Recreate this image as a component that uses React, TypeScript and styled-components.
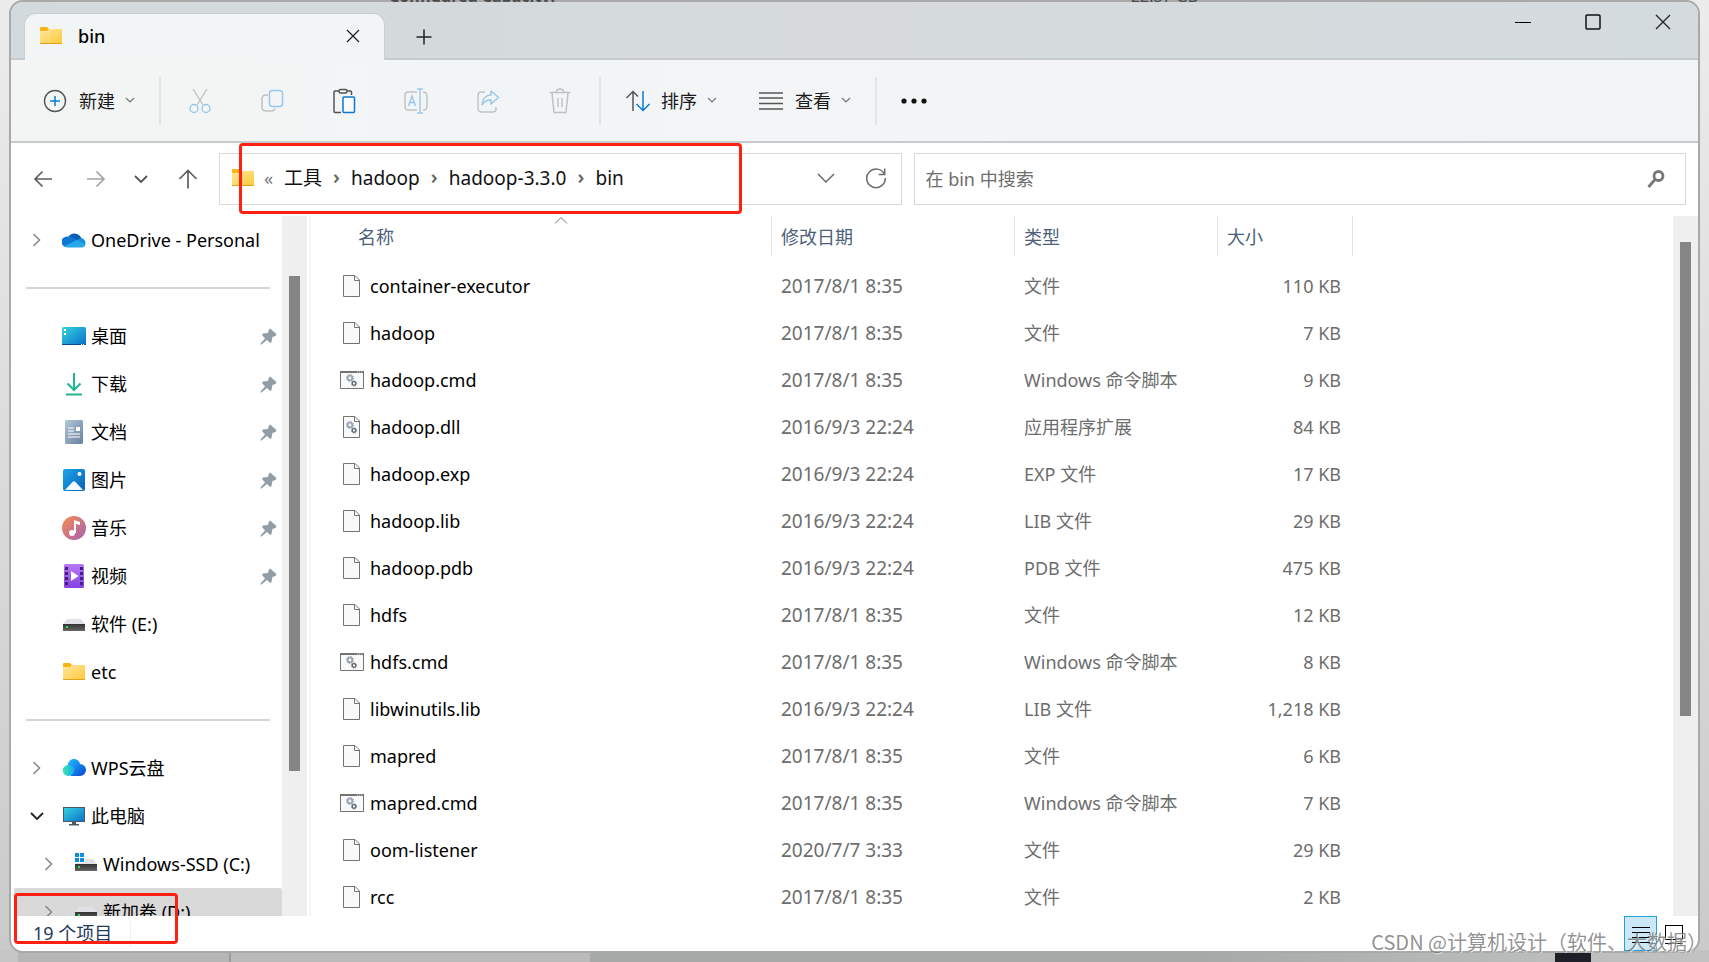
import React from "react";
import styled, { createGlobalStyle, css } from "styled-components";

const Global = createGlobalStyle`
  *, *::before, *::after { box-sizing: border-box; }
  html, body { margin: 0; padding: 0; }
  body, button, input {
    font-family: "Noto Sans", "Noto Sans CJK SC", sans-serif;
    font-size: 18px;
    line-height: 24px;
  }
  button { border: 0; padding: 0; background: none; color: inherit; }
  svg { display: block; flex: none; }
`;

const Desktop = styled.div`
  position: relative;
  display: flex;
  height: 100vh;
  min-height: 480px;
  padding: 0 9px 9px;
  overflow: hidden;
  background: linear-gradient(180deg, #ececec 0%, #dcdcdc 45%, #cacaca 100%);
`;

const DesktopFloor = styled.div`
  position: absolute;
  left: 0;
  right: 0;
  bottom: 0;
  height: 12px;
  background: linear-gradient(90deg, #c6c6c6 0 18px, #b6b6b6 18px 229px, #9c9c9c 229px 231px, #bababa 231px 590px, #a7a9a8 590px 1200px, #b9bbba 1500px, #c2c2c2 100%);
`;

const FloorTile = styled.span`
  position: absolute;
  right: 118px;
  bottom: 0;
  width: 36px;
  height: 11px;
  background: #1d2028;
`;

const Window = styled.main`
  position: relative;
  flex: 1;
  min-width: 0;
  display: flex;
  flex-direction: column;
  border: 2px solid #a9a9a9;
  border-radius: 14px;
  overflow: hidden;
  background: #fff;
`;

const HiddenPage = styled.div`
  position: absolute;
  top: 0;
  left: 389px;
  right: 0;
  height: 2px;
  overflow: hidden;
  color: #4c4c4c;
`;

const HiddenLine = styled.div`
  display: flex;
  gap: 576px;
  margin-top: -14px;
  font-size: 16px;
  line-height: 20px;
  white-space: nowrap;
`;

const TitleBar = styled.header`
  display: flex;
  align-items: flex-end;
  height: 58px;
  padding-left: 13px;
  background: linear-gradient(90deg, #d3dadd, #d6dadb 50%, #d4dbdf);
  box-shadow: inset 0 -2px #c6cbce;
`;

const Tab = styled.div`
  display: flex;
  align-items: center;
  width: 361px;
  height: 47px;
  margin-top: 11px;
  padding: 0 23px 2px 14px;
  border: 1px solid #c9cfd1;
  border-bottom: 0;
  border-radius: 12px 12px 0 0;
  background: #f2f5f5;
  font-weight: 500;
`;

const TabName = styled.span`
  flex: 1;
  margin-left: 15px;
`;

const IconButton = styled.button<{ $w?: number; $h?: number }>`
  display: inline-flex;
  align-items: center;
  justify-content: center;
  width: ${(p) => p.$w ?? 24}px;
  height: ${(p) => p.$h ?? 24}px;
`;

const WindowControls = styled.div`
  display: flex;
  align-self: flex-start;
  margin-left: auto;
`;

const CommandBar = styled.div`
  display: flex;
  align-items: center;
  height: 83px;
  padding-left: 32px;
  background: linear-gradient(90deg, #f3f5f4, #f2f5f6 30%, #f3f4f5 60%, #f1f4f6);
  border-bottom: 2px solid #c5cacc;
`;

const CommandButton = styled.button<{ $gap: number }>`
  display: inline-flex;
  align-items: center;
  gap: 10px;
  height: 40px;
  color: #1b1b1b;
  white-space: nowrap;
  & > :first-child { margin-right: ${(p) => p.$gap}px; }
`;

const CommandGroup = styled.div`
  display: flex;
  gap: 42px;
`;

const CommandRule = styled.span`
  width: 2px;
  height: 48px;
  margin: 0 24px;
  background: #e3e5e6;
`;

const Tools = styled.div`
  display: flex;
  gap: 48px;
  padding: 0 3px;
`;

const NavRow = styled.div`
  display: flex;
  align-items: flex-start;
  height: 73px;
  padding: 10px 12px 0 0;
`;

const NavButtons = styled.div`
  display: flex;
  align-items: center;
  width: 208px;
  height: 52px;
  padding-left: 6px;
`;

const Address = styled.nav`
  display: flex;
  align-items: center;
  flex: 670 1 0;
  min-width: 0;
  height: 52px;
  padding: 0 0 2px 11px;
  border: 1px solid #d9d9d9;
`;

const Crumbs = styled.ol`
  display: flex;
  align-items: center;
  flex: 1;
  min-width: 0;
  margin: 0;
  padding: 0;
  list-style: none;
  overflow: hidden;
  white-space: nowrap;
  font-size: 19px;
`;

const Crumb = styled.li`
  display: flex;
  align-items: center;
  & + &::before {
    content: "›";
    width: 29px;
    padding-bottom: 2px;
    text-align: center;
    font-size: 20px;
    font-weight: 600;
    color: #666;
  }
`;

const CrumbLink = styled.a`
  color: #111;
  text-decoration: none;
`;

const Overflow = styled.span`
  width: 29px;
  padding-left: 9px;
  color: #777;
`;

const SearchBox = styled.label`
  display: flex;
  align-items: center;
  flex: 739 1 0;
  min-width: 0;
  height: 52px;
  margin-left: 12px;
  padding: 0 20px 0 10px;
  border: 1px solid #d9d9d9;
`;

const SearchInput = styled.input`
  flex: 1;
  min-width: 0;
  padding: 0;
  border: 0;
  outline: 0;
  background: none;
  &::placeholder { color: #6d6d6d; opacity: 1; }
`;

const Body = styled.div`
  display: flex;
  flex: 1;
  min-height: 0;
`;

const Sidebar = styled.aside`
  width: 271px;
  flex: none;
  overflow: hidden;
  padding-left: 3px;
`;

const SideRow = styled.a<{ $child?: boolean; $selected?: boolean }>`
  display: flex;
  align-items: center;
  height: 48px;
  padding-left: ${(p) => (p.$child ? 29 : 17)}px;
  color: #000;
  text-decoration: none;
  white-space: nowrap;
  ${(p) => p.$selected && css`background: #d9d9d9; border-radius: 2px;`}
`;

const Twisty = styled.span`
  display: flex;
  justify-content: center;
  width: 11px;
  margin-right: 20px;
`;

const SideIcon = styled.span`
  width: 24px;
  margin-right: 5px;
`;

const SideLabel = styled.span`
  flex: 1;
`;

const PinSlot = styled.span`
  margin-right: 5px;
`;

const SideRule = styled.hr`
  height: 2px;
  margin: 23px 12px;
  border: 0;
  background: #d4d4d4;
`;

const ScrollTrack = styled.div<{ $top: number; $size: number; $rest: number }>`
  display: flex;
  flex-direction: column;
  align-items: center;
  flex: none;
  width: 25px;
  padding-top: ${(p) => p.$top}px;
  background: #efefef;
  &::before {
    content: "";
    flex: ${(p) => p.$size} 1 0;
    width: 11px;
    background: #858585;
  }
  &::after {
    content: "";
    flex: ${(p) => p.$rest} 1 0;
  }
`;

const FilePane = styled.section`
  flex: 1;
  min-width: 0;
  margin-left: 2px;
  border-left: 2px solid #f6f6f6;
  overflow: hidden;
`;

const FileTable = styled.table`
  width: 1042px;
  border-collapse: separate;
  border-spacing: 0;
  table-layout: fixed;
`;

const HeadCell = styled.th<{ $w: number; $pad: number }>`
  position: relative;
  width: ${(p) => p.$w}px;
  height: 40px;
  padding: 1px 0 0 ${(p) => p.$pad}px;
  border-right: 1px solid #e2e2e2;
  text-align: left;
  font-weight: 400;
  color: #4c607a;
`;

const SortMark = styled.svg`
  position: absolute;
  top: 0;
  left: 50%;
  margin-left: 13px;
`;

const HeadGap = styled.tr`
  height: 6px;
`;

const FileRow = styled.tr`
  height: 47px;
`;

const Cell = styled.td<{ $right?: boolean; $date?: boolean }>`
  padding: 0 ${(p) => (p.$right ? 12 : 0)}px 0 9px;
  text-align: ${(p) => (p.$right ? "right" : "left")};
  font-size: ${(p) => (p.$date ? 19 : 18)}px;
  color: #6d6d6d;
  white-space: nowrap;
`;

const FileName = styled.div`
  display: flex;
  align-items: center;
  gap: 6px;
  margin-left: 20px;
  color: #000;
`;

const StatusBar = styled.footer`
  display: flex;
  align-items: center;
  height: 35px;
  padding: 0 8px 0 22px;
  color: #1e395b;
`;

const StatusText = styled.span`
  width: 98px;
  margin-right: auto;
  padding-bottom: 2px;
  border-right: 1px solid #f0f0f0;
`;

const ViewToggle = styled.button<{ $active?: boolean }>`
  display: flex;
  align-items: center;
  justify-content: center;
  width: 33px;
  height: 35px;
  ${(p) => p.$active && css`background: #cce8f7; border: 1px solid #26a0da;`}
`;

const Marker = styled.div<{ $x: number; $y: number; $w: number; $h: number }>`
  position: absolute;
  left: ${(p) => p.$x}px;
  top: ${(p) => p.$y}px;
  width: ${(p) => p.$w}px;
  height: ${(p) => p.$h}px;
  border: 3px solid #fd2013;
  border-radius: 4px;
  pointer-events: none;
`;

const Watermark = styled.div`
  position: absolute;
  right: 2px;
  bottom: 6px;
  font-family: "Noto Sans CJK SC", sans-serif;
  font-size: 20px;
  line-height: 28px;
  color: rgba(110, 110, 110, 0.75);
  text-shadow: 1px 1px rgba(255, 255, 255, 0.6);
  white-space: nowrap;
  pointer-events: none;
`;

const HiddenDefs = styled.svg`
  position: absolute;
  width: 0;
  height: 0;
`;

const S = (p: React.SVGProps<SVGSVGElement> & { w: number; h: number }) => {
  const { w, h, ...rest } = p;
  return <svg width={w} height={h} viewBox={`0 0 ${w} ${h}`} fill="none" aria-hidden="true" {...rest} />;
};

const Defs = () => (
  <HiddenDefs aria-hidden="true">
    <defs>
      <linearGradient id="folder" x1="0" y1="0" x2="1" y2="1"><stop stopColor="#ffe8a0" /><stop offset="1" stopColor="#ffc836" /></linearGradient>
      <linearGradient id="desk" x1="0" y1="0" x2="1" y2="1"><stop stopColor="#35d5e2" /><stop offset="1" stopColor="#0b6fc6" /></linearGradient>
      <linearGradient id="doc" x1="0" y1="0" x2="1" y2="1"><stop stopColor="#b4c6d9" /><stop offset="1" stopColor="#68819f" /></linearGradient>
      <linearGradient id="pic" x1="0" y1="0" x2="1" y2="1"><stop stopColor="#1ca4ea" /><stop offset="1" stopColor="#0863b5" /></linearGradient>
      <linearGradient id="music" x1="0" y1="0" x2="1" y2="1"><stop stopColor="#fb8b4e" /><stop offset="1" stopColor="#a361b5" /></linearGradient>
      <linearGradient id="video" x1="0" y1="0" x2="0" y2="1"><stop stopColor="#b77af5" /><stop offset="1" stopColor="#8741e0" /></linearGradient>
      <linearGradient id="wps" x1="0" y1="0" x2="1" y2="0"><stop stopColor="#3be8b0" /><stop offset="1" stopColor="#16a4f5" /></linearGradient>
      <linearGradient id="wpsb" x1="0" y1="0" x2="1" y2="1"><stop stopColor="#22c0ff" /><stop offset="1" stopColor="#0842d2" /></linearGradient>
      <linearGradient id="disk" x1="0" y1="0" x2="0" y2="1"><stop stopColor="#333" /><stop offset="1" stopColor="#666" /></linearGradient>
    </defs>
  </HiddenDefs>
);

const Folder = () => (
  <S w={24} h={20}>
    <path d="M1 2q0-1 1-1h6l2 2-1 4H1z" fill="#f9b516" />
    <path d="M1 5h7l2-2h13v15H1z" fill="url(#folder)" />
    <path d="M1 17.5h22" stroke="#e3a21d" />
  </S>
);
const Close = ({ s = 14 }: { s?: number }) => (
  <S w={16} h={16} stroke="#222" strokeWidth="1.3"><path d={`M${8 - s / 2} ${8 - s / 2}l${s} ${s}M${8 + s / 2} ${8 - s / 2}l-${s} ${s}`} /></S>
);
const Down = ({ s = 4, c = "#777", w = 1.2 }: { s?: number; c?: string; w?: number }) => (
  <S w={s * 2 + 2} h={s + 3} stroke={c} strokeWidth={w}><path d={`M1 1l${s} ${s} ${s}-${s}`} /></S>
);
const Right = () => <S w={9} h={14} stroke="#8a8a8a" strokeWidth="1.6"><path d="M1.5 1l6 6-6 6" /></S>;
const Pin = () => (
  <S w={17} h={17} fill="#929da6"><path d="M10 0.500l6.500 5.500-1 2-3 1-1 5-1.500 1L7 12l-5.500 4.500H.5V15.500L5 10.500 2 7l1-1.500L8 5l1-3.500z" /></S>
);
const Cloud = () => (
  <S w={24} h={18}>
    <path d="M6 7a7 7 0 0 1 12-2l2 3-8 4z" fill="#0a5fb4" />
    <path d="M6 5.500c3-.3 5 1 11 4.500l-11 6H5A5.200 5.200 0 0 1 1.500 6.700 8 8 0 0 1 6 5.500z" fill="#0c78d4" />
    <path d="M15 9l4-2a5 5 0 0 1 4 7l-5 1z" fill="#1590df" />
    <path d="M2.500 15L15 9l8.500 4.500c-.5 2-2 3-4 3H5.500c-1 0-2-.5-3-1.500z" fill="#29a7ea" />
  </S>
);
const DeskIcon = () => (
  <S w={24} h={19}>
    <rect width="24" height="18" rx="1.500" fill="url(#desk)" />
    <path d="M2 2h2v2H2zM2 6h2v2H2z" fill="#fff" />
    <path d="M0 17.500h24" stroke="#084b8a" /><path d="M19 17.500h4" stroke="#fff" strokeDasharray="1 1" />
  </S>
);
const DownloadIcon = () => (
  <S w={24} h={24} stroke="#20b490" strokeWidth="2"><path d="M12 1v17M5.500 11.500l6.500 6.500 6.500-6.500M4 22.500h16" /></S>
);
const DocIcon = () => (
  <S w={24} h={24}><rect x="3" width="18" height="24" rx="1.500" fill="url(#doc)" /><path d="M6 8h6M6 11h6M6 14h12M6 17h12" stroke="#fff" strokeWidth="1.200" /><path d="M14 7h4v4h-4z" fill="#fff" /></S>
);
const PicIcon = () => (
  <S w={24} h={24}><rect x="1" y="1" width="22" height="22" rx="2" fill="url(#pic)" /><path d="M3 22l7.500-8q1.500-1.500 3 0l7.500 8z" fill="#f3f9ff" /><circle cx="17.500" cy="6" r="2" fill="#fff" /></S>
);
const MusicIcon = () => (
  <S w={24} h={24}><circle cx="12" cy="12" r="12" fill="url(#music)" /><circle cx="10" cy="17" r="3" fill="#fff" /><path d="M12 4l6 2v3l-4-1v9h-2z" fill="#fff" /></S>
);
const VideoIcon = () => (
  <S w={24} h={24}><rect x="2" width="20" height="24" rx="1.500" fill="url(#video)" /><path d="M3 3h3v3H3zm0 5h3v3H3zm0 5h3v3H3zm0 5h3v3H3zM18 3h3v3h-3zm0 5h3v3h-3zm0 5h3v3h-3zm0 5h3v3h-3z" fill="#42207d" /><path d="M9 7l7.500 5L9 17z" fill="#fff" /></S>
);
const DiskIcon = ({ win }: { win?: boolean }) => (
  <S w={24} h={24}>
    <path d="M5 7h14l4 5H1z" fill="#dfe1e4" /><rect x="1" y="12" width="22" height="7" fill="url(#disk)" /><path d="M4 14h2v2H4z" fill="#36e04a" />
    {win && <><path d="M0 2h11v9H0z" fill="#fff" /><path d="M1 1h4v4H1zm5 0h4v4H6zM1 6h4v4H1zm5 0h4v4H6z" fill="#0c8de0" /></>}
  </S>
);
const WpsIcon = () => (
  <S w={24} h={18}><path d="M6 7a6 6 0 0 1 12-2 6 6 0 0 1 0 12H9z" fill="url(#wpsb)" /><path d="M6.500 17A5.500 5.500 0 0 1 6 6c3 0 5 1.500 7 4l-2 5q-2 2-4.500 2z" fill="url(#wps)" /></S>
);
const PcIcon = () => (
  <S w={24} h={20}><rect x="1.500" y="1.500" width="21" height="14" fill="url(#desk)" stroke="#47596a" /><path d="M10 16h4v2h3v1.500H7V18h3z" fill="#4d5a66" /></S>
);

const Gears = () => (
  <>
    <circle cx="10" cy="7" r="2.300" stroke="#9aa5b1" strokeWidth="1.800" /><circle cx="10" cy="7" r="3.600" stroke="#9aa5b1" strokeDasharray="1.400 1.430" />
    <circle cx="14" cy="12.500" r="1.800" stroke="#5a646e" strokeWidth="1.300" /><circle cx="14" cy="12.500" r="2.700" stroke="#5a646e" strokeWidth=".8" strokeDasharray="1 1.120" />
  </>
);
const PageIcon = ({ gears }: { gears?: boolean }) => (
  <S w={24} h={24}><path d="M3.500 1.500h11.500l4.500 4.500v16.500h-16z" fill="#f9f9f9" stroke="#737373" /><path d="M14.500 1.500v5h5" stroke="#737373" />{gears && <g transform="translate(0 3)"><Gears /></g>}</S>
);
const CmdIcon = () => (
  <S w={24} h={20}><path d="M.5 1.500h23v17H.5z" fill="#f9f9f9" stroke="#737373" /><path d="M0 2h24" stroke="#737373" strokeWidth="2" /><path d="M17 2h6" stroke="#ddd" strokeDasharray="1 1" /><g transform="translate(0 1)"><Gears /></g></S>
);

const NewIcon = () => <S w={24} h={24}><circle cx="12" cy="12" r="10.500" stroke="#555" strokeWidth="1.400" /><path d="M12 7v10M7 12h10" stroke="#0a7ad4" strokeWidth="1.500" /></S>;
const gray = "#bfc2c3";
const blue = "#9cc7e8";
const CutIcon = () => <S w={24} h={26} strokeWidth="1.400"><path d="M5 1l10 16M19 1L9 17" stroke={gray} /><circle cx="6" cy="20.500" r="4" stroke={blue} /><circle cx="18" cy="20.500" r="4" stroke={blue} /></S>;
const CopyIcon = () => <S w={24} h={26} strokeWidth="1.500"><path d="M8 7H6Q2 7 2 11v8q0 4 4 4h5q3 0 4-2.500" stroke={gray} /><rect x="9.500" y="2.500" width="13" height="16" rx="3" stroke={blue} /></S>;
const PasteIcon = () => <S w={24} h={26} strokeWidth="1.500"><path d="M7 3H3q-1 0-1 1v19.500q0 1 1 1h6M15 3h3.500q1 0 1 1v3" stroke="#555" /><rect x="7" y="1.500" width="8" height="3.500" rx="1.500" stroke="#555" /><rect x="11" y="9" width="11.500" height="15.500" rx="1" fill="#fafafa" stroke="#0a7ad4" /></S>;
const RenameIcon = () => <S w={24} h={26} strokeWidth="1.400"><path d="M13 4H4Q1 4 1 7v12q0 3 3 3h9M19 4q4 0 4 4v10q0 4-4 4" stroke={gray} /><path d="M4.500 18L8 8l3.500 10M6 14.500h4M16 1v24M13 1h6M13 25h6" stroke={blue} /></S>;
const ShareIcon = () => <S w={24} h={26} strokeWidth="1.400"><path d="M9 4H5Q2 4 2 7v13q0 4 4 4h11q3 0 3-3v-2" stroke={gray} /><path d="M15 3l7.500 6.500L15 16v-4q-6 0-9 5 1-10 9-10z" stroke={blue} strokeLinejoin="round" /></S>;
const TrashIcon = () => <S w={24} h={26} strokeWidth="1.500" stroke={gray}><path d="M1.500 4.500h21M4 4.500l2 20h12l2-20M8.500 4q0-3 3.500-3t3.500 3M10 10v9M14 10v9" /></S>;
const SortIcon = () => <S w={26} h={24} strokeWidth="1.500"><path d="M8 22V2.500M1.500 9L8 2.500l5 5" stroke="#555" /><path d="M18 2v19.500M11.500 15l6.500 6.500 6.500-6.500" stroke="#0a7ad4" /></S>;
const ViewIcon = () => <S w={24} h={20} strokeWidth="1.500" stroke="#555"><path d="M0 2h24M0 7h24M0 12.500h24M0 18h24" /></S>;
const Back = ({ c }: { c: string }) => <S w={20} h={18} stroke={c} strokeWidth="1.700"><path d="M19 9H2M9.500 1.500L2 9l7.500 7.500" /></S>;
const Forward = ({ c }: { c: string }) => <S w={20} h={18} stroke={c} strokeWidth="1.700"><path d="M1 9h17M10.500 1.500L18 9l-7.500 7.500" /></S>;
const UpArrow = () => <S w={20} h={20} stroke="#5f5f5f" strokeWidth="1.700"><path d="M10 19.500V1.500M1.500 10L10 1.500l8.500 8.500" /></S>;
const Refresh = () => <S w={22} h={22} stroke="#6a6a6a" strokeWidth="1.500"><path d="M19.500 7.500A9.300 9.300 0 1 0 20.300 11M19.700 1.500v6h-6" /></S>;
const Magnifier = () => <S w={18} h={20} stroke="#777"><circle cx="11.500" cy="7" r="4.500" strokeWidth="2.800" /><path d="M8 10.500L1.500 18" strokeWidth="2.800" /></S>;

type Side = { label: string; icon: React.ReactNode; twisty?: "open" | "closed"; child?: boolean; pin?: boolean; selected?: boolean };
const sideItems: (Side | null)[] = [
  { label: "OneDrive - Personal", icon: <Cloud />, twisty: "closed" },
  null,
  { label: "桌面", icon: <DeskIcon />, pin: true },
  { label: "下载", icon: <DownloadIcon />, pin: true },
  { label: "文档", icon: <DocIcon />, pin: true },
  { label: "图片", icon: <PicIcon />, pin: true },
  { label: "音乐", icon: <MusicIcon />, pin: true },
  { label: "视频", icon: <VideoIcon />, pin: true },
  { label: "软件 (E:)", icon: <DiskIcon /> },
  { label: "etc", icon: <Folder /> },
  null,
  { label: "WPS云盘", icon: <WpsIcon />, twisty: "closed" },
  { label: "此电脑", icon: <PcIcon />, twisty: "open" },
  { label: "Windows-SSD (C:)", icon: <DiskIcon win />, twisty: "closed", child: true },
  { label: "新加卷 (D:)", icon: <DiskIcon />, twisty: "closed", child: true, selected: true },
];

const files: [string, string, string, string][] = [
  ["container-executor", "2017/8/1 8:35", "文件", "110 KB"],
  ["hadoop", "2017/8/1 8:35", "文件", "7 KB"],
  ["hadoop.cmd", "2017/8/1 8:35", "Windows 命令脚本", "9 KB"],
  ["hadoop.dll", "2016/9/3 22:24", "应用程序扩展", "84 KB"],
  ["hadoop.exp", "2016/9/3 22:24", "EXP 文件", "17 KB"],
  ["hadoop.lib", "2016/9/3 22:24", "LIB 文件", "29 KB"],
  ["hadoop.pdb", "2016/9/3 22:24", "PDB 文件", "475 KB"],
  ["hdfs", "2017/8/1 8:35", "文件", "12 KB"],
  ["hdfs.cmd", "2017/8/1 8:35", "Windows 命令脚本", "8 KB"],
  ["libwinutils.lib", "2016/9/3 22:24", "LIB 文件", "1,218 KB"],
  ["mapred", "2017/8/1 8:35", "文件", "6 KB"],
  ["mapred.cmd", "2017/8/1 8:35", "Windows 命令脚本", "7 KB"],
  ["oom-listener", "2020/7/7 3:33", "文件", "29 KB"],
  ["rcc", "2017/8/1 8:35", "文件", "2 KB"],
];

const fileIcon = (name: string) =>
  name.endsWith(".cmd") ? <CmdIcon /> : <PageIcon gears={name.endsWith(".dll")} />;

const tools: [string, React.ReactNode][] = [
  ["剪切", <CutIcon />], ["复制", <CopyIcon />], ["粘贴", <PasteIcon />],
  ["重命名", <RenameIcon />], ["共享", <ShareIcon />], ["删除", <TrashIcon />],
];

export default function App() {
  return (
    <Desktop>
      <Global />
      <Defs />
      <DesktopFloor />
      <FloorTile />
      <Window>
        <TitleBar>
          <Tab>
            <Folder />
            <TabName>bin</TabName>
            <IconButton aria-label="关闭标签页" $w={16}><Close s={12} /></IconButton>
          </Tab>
          <IconButton aria-label="新标签页" $w={77} $h={47}>
            <S w={16} h={16} stroke="#222" strokeWidth="1.500"><path d="M8 0.500v15M0.500 8h15" /></S>
          </IconButton>
          <WindowControls>
            <IconButton aria-label="最小化" $w={70} $h={40}><S w={16} h={16} stroke="#000"><path d="M0 8.500h16" /></S></IconButton>
            <IconButton aria-label="最大化" $w={70} $h={40}><S w={16} h={16} stroke="#111" strokeWidth="1.500"><rect x="1" y="1" width="14" height="14" rx="1" /></S></IconButton>
            <IconButton aria-label="关闭" $w={70} $h={40}><Close /></IconButton>
          </WindowControls>
        </TitleBar>

        <CommandBar>
          <CommandButton $gap={2}><NewIcon />新建<Down /></CommandButton>
          <CommandRule />
          <Tools>
            {tools.map(([label, icon]) => <IconButton key={label} aria-label={label} $h={26}>{icon}</IconButton>)}
          </Tools>
          <CommandRule />
          <CommandGroup>
            <CommandButton $gap={0}><SortIcon />排序<Down /></CommandButton>
            <CommandButton $gap={2}><ViewIcon />查看<Down /></CommandButton>
          </CommandGroup>
          <CommandRule />
          <IconButton aria-label="更多" $w={26}><S w={26} h={6} fill="#111"><circle cx="3" cy="3" r="2.600" /><circle cx="13" cy="3" r="2.600" /><circle cx="23" cy="3" r="2.600" /></S></IconButton>
        </CommandBar>

        <NavRow>
          <NavButtons>
            <IconButton aria-label="后退" $w={52}><Back c="#5f5f5f" /></IconButton>
            <IconButton aria-label="前进" $w={54}><Forward c="#a2a2a2" /></IconButton>
            <IconButton aria-label="最近的位置" $w={36}><Down s={6} c="#555" w={1.8} /></IconButton>
            <IconButton aria-label="上一级" $w={58}><UpArrow /></IconButton>
          </NavButtons>
          <Address aria-label="地址">
            <Folder />
            <Overflow>«</Overflow>
            <Crumbs>
              {["工具", "hadoop", "hadoop-3.3.0", "bin"].map((c) => <Crumb key={c}><CrumbLink href="#">{c}</CrumbLink></Crumb>)}
            </Crumbs>
            <IconButton aria-label="历史记录" $w={50}><Down s={8} c="#6a6a6a" w={1.5} /></IconButton>
            <IconButton aria-label="刷新" $w={50}><Refresh /></IconButton>
          </Address>
          <SearchBox>
            <SearchInput type="text" aria-label="搜索" placeholder="在 bin 中搜索" />
            <Magnifier />
          </SearchBox>
        </NavRow>

        <Body>
          <Sidebar>
            {sideItems.map((it, i) => it ? (
              <SideRow key={i} href="#" $child={it.child} $selected={it.selected}>
                <Twisty>{it.twisty === "closed" ? <Right /> : it.twisty === "open" ? <Down s={6} c="#222" w={1.8} /> : null}</Twisty>
                <SideIcon>{it.icon}</SideIcon>
                <SideLabel>{it.label}</SideLabel>
                {it.pin && <PinSlot><Pin /></PinSlot>}
              </SideRow>
            ) : <SideRule key={i} />)}
          </Sidebar>
          <ScrollTrack $top={60} $size={495} $rest={145} />
          <FilePane>
            <FileTable>
              <thead>
                <tr>
                  <HeadCell $w={461} $pad={47}>名称<SortMark width="14" height="9" fill="none" stroke="#777" aria-hidden="true"><path d="M1 7.500l6-6 6 6" /></SortMark></HeadCell>
                  <HeadCell $w={243} $pad={9}>修改日期</HeadCell>
                  <HeadCell $w={203} $pad={9}>类型</HeadCell>
                  <HeadCell $w={135} $pad={9}>大小</HeadCell>
                </tr>
              </thead>
              <tbody>
                <HeadGap />
                {files.map(([name, date, type, size]) => (
                  <FileRow key={name}>
                    <Cell><FileName>{fileIcon(name)}{name}</FileName></Cell>
                    <Cell $date>{date}</Cell>
                    <Cell>{type}</Cell>
                    <Cell $right>{size}</Cell>
                  </FileRow>
                ))}
              </tbody>
            </FileTable>
          </FilePane>
          <ScrollTrack $top={26} $size={474} $rest={200} />
        </Body>

        <StatusBar>
          <StatusText>19 个项目</StatusText>
          <ViewToggle $active aria-label="详细信息"><S w={18} h={18} stroke="#000"><path d="M0 2.500h18M0 7.500h18M0 12.500h18M0 17.500h18" /></S></ViewToggle>
          <ViewToggle aria-label="大图标"><S w={18} h={20} stroke="#000"><rect x=".5" y="1.500" width="17" height="14" /><path d="M0 19.500h18" /></S></ViewToggle>
        </StatusBar>
      </Window>
      <HiddenPage aria-hidden="true"><HiddenLine><b>Configured Capacity:</b><span>22.37 GB</span></HiddenLine></HiddenPage>
      <Marker $x={239} $y={143} $w={503} $h={71} />
      <Marker $x={14} $y={893} $w={164} $h={51} />
      <Watermark>CSDN @计算机设计（软件、大数据）</Watermark>
    </Desktop>
  );
}
